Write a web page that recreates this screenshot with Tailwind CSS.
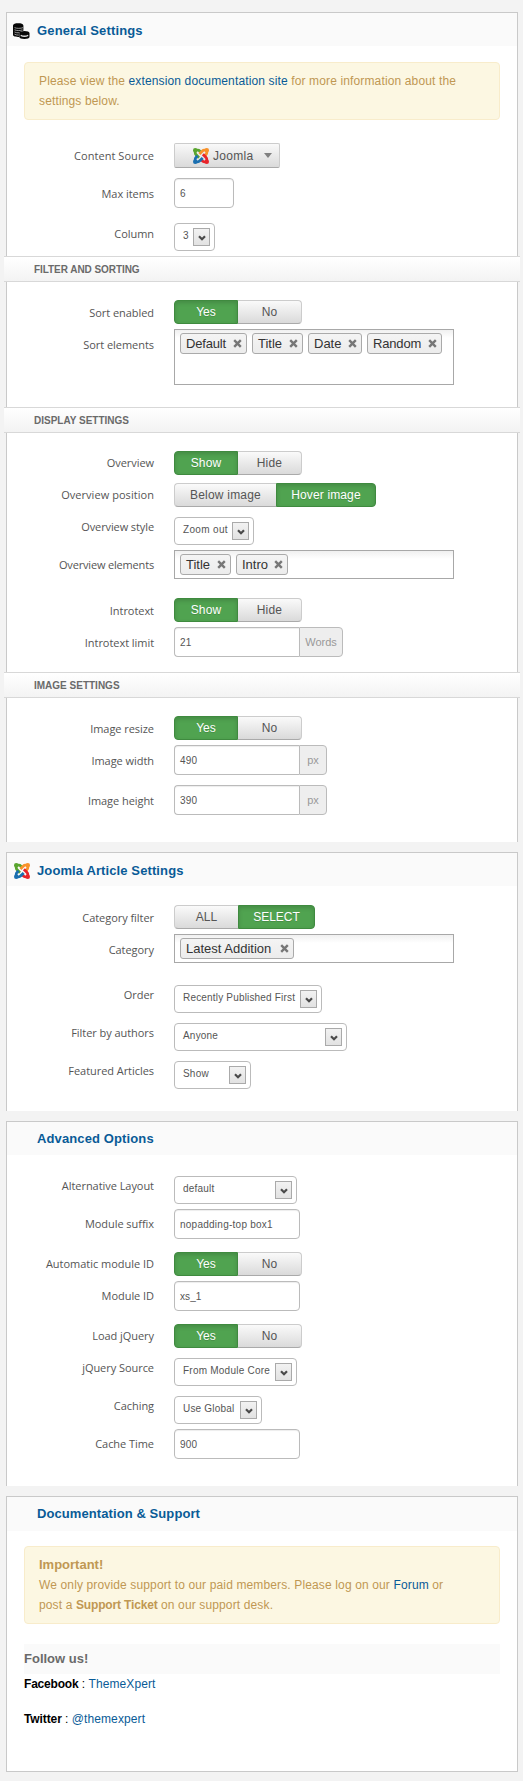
<!DOCTYPE html>
<html lang="en">
<head>
<meta charset="utf-8">
<title>Module settings</title>
<script src="https://cdn.jsdelivr.net/npm/@tailwindcss/browser@4"></script>
</head>
<body class="bg-[#f3f3f3] font-['Liberation_Sans',Arial,sans-serif] text-[12px] text-[#555]">

<svg class="hidden">
  <symbol id="joomla" viewBox="0 0 16 16">
    <g fill="none" stroke-width="2.8" stroke-linejoin="round">
      <path stroke="#5aa52f" d="M2.2 2.2V4.6Q2.2 6 3.4 7.1L6 9.7M2.2 2.2H4.6Q6 2.2 7 3.2L8.6 4.8"/>
      <path stroke="#f8922b" d="M13.8 2.2H11.4Q10.2 2.2 9.2 3.2L6.4 6M13.8 2.2V4.6Q13.8 5.8 12.8 6.8L11.4 8.2"/>
      <path stroke="#e8242a" d="M13.8 13.8V11.4Q13.8 10.2 12.8 9.2L9.9 6.3M13.8 13.8H11.4Q10.2 13.8 9.2 12.8L7.8 11.4"/>
      <path stroke="#1a6fb0" d="M2.2 13.8H4.6Q5.8 13.8 6.8 12.8L9.7 9.9M2.2 13.8V11.4Q2.2 10.2 3.2 9.2L4.6 7.8"/>
    </g>
    <circle cx="2.2" cy="2.2" r="2.2" fill="#5aa52f"/><circle cx="13.8" cy="2.2" r="2.2" fill="#f8922b"/>
    <circle cx="13.8" cy="13.8" r="2.2" fill="#e8242a"/><circle cx="2.2" cy="13.8" r="2.2" fill="#1a6fb0"/>
  </symbol>
  <symbol id="coins" viewBox="0 0 17 16">
    <path d="M0 2.4C0 .9 2.4.3 5.2.3s5.200.6 5.200 2.100v5.300C8 8 6.200 9 6.200 10.600v3.400C3 14 0 13.200 0 12z" fill="#080808"/>
    <path d="M1.500 4.600c2 1 6.500 1 8.500 0M1.500 6.800c2 1 6 1 8 0M1.500 9c1.300.7 3 .9 4.700.8M1.500 11.200c1.300.7 3 .9 4.300.9" fill="none" stroke="#bbb" stroke-width=".8"/>
    <path d="M6.300 10c0-1.400 2.200-2.100 5.100-2.100s5.100.7 5.100 2.100v4c0 1.200-2.200 1.900-5.100 1.900s-5.100-.7-5.100-1.900z" fill="#080808"/>
    <path d="M7.700 12.300c2 1 5.500 1 7.500 0" fill="none" stroke="#ddd" stroke-width="1.300"/>
  </symbol>
  <symbol id="x" viewBox="0 0 9 9"><path d="M1.200 1.200 7.800 7.800M7.800 1.200 1.200 7.800" stroke="#777" stroke-width="2.400" fill="none"/></symbol>
  <symbol id="v" viewBox="0 0 8 6"><path d="M1 1.200 4 4.200 7 1.200" stroke="#4a4a4a" stroke-width="2.200" fill="none"/></symbol>
</svg>

<main class="flex flex-col gap-[10px] pt-3 pl-[6px] pr-[5px]">

  <!-- General settings -->
  <section class="h-[830px] border border-b-0 border-[#c9c9c9] bg-white">
    <h2 class="flex h-[33px] items-center bg-[#fafafa] pt-[2px] pl-[6px] text-[13px] font-bold tracking-[0.15px] text-[#095b97]"><svg class="mr-[7px] h-4 w-[17px]"><use href="#coins"/></svg>General Settings</h2>
    <div class="mt-4 ml-[17px] h-[58px] w-[476px] rounded border border-[#f8eccb] bg-[#fcf7e2] px-[14px] py-2 leading-5 tracking-[0.135px] text-[#c09853]">Please view the <a class="text-[#095b97]">extension documentation site</a> for more information about the<br>settings below.</div>

    <div class="mt-[23px] flex h-[35px] gap-5">
      <label class="w-[147px] pt-[3px] text-right font-['Open_Sans',sans-serif] text-[11px] leading-5 tracking-[0.05px]">Content Source</label>
      <button class="flex h-[25px] w-[106px] items-center rounded-[2px] border border-[#ccc] border-b-[#aaa] bg-linear-to-b from-[#f9f9f9] to-[#dadada] pl-[18px] tracking-[0.3px]"><svg class="mr-1 h-4 w-4"><use href="#joomla"/></svg>Joomla<svg class="ml-[11px] h-[5px] w-2" viewBox="0 0 8 5"><path d="M0 0H8L4 5z" fill="#808080"/></svg></button>
    </div>
    <div class="flex h-[45px] gap-5">
      <label class="w-[147px] pt-[6px] text-right font-['Open_Sans',sans-serif] text-[11px] leading-5 tracking-[-0.05px]">Max items</label>
      <div class="flex h-[30px] w-[60px] items-center rounded border border-[#bbb] pl-[5px] text-[10px] tracking-[0.25px] shadow-[inset_0_1px_1px_rgba(0,0,0,0.075)]">6</div>
    </div>
    <div class="flex h-[33px] gap-5">
      <label class="w-[147px] pt-px text-right font-['Open_Sans',sans-serif] text-[11px] leading-5 tracking-[-0.05px]">Column</label>
      <div class="flex h-7 w-[41px] justify-between rounded border border-[#bbb] pr-1 pl-2 text-[10px] leading-6 tracking-[0.2px]">3<span class="mt-1 flex h-[18px] w-[17px] items-center justify-center border border-[#aaa] bg-linear-to-b from-[#f2f2f2] to-[#e2e2e2]"><svg class="mt-px h-[6px] w-2"><use href="#v"/></svg></span></div>
    </div>

    <h3 class="-mx-[3px] flex h-[26px] items-center border-y border-[#d8d8d8] bg-linear-to-b from-white to-[#f3f3f3] pl-[30px] text-[10px] font-bold tracking-[-0.06px] text-[#6a6a6a]">FILTER AND SORTING</h3>
    <div class="mt-[18px] flex h-[29px] gap-5">
      <label class="w-[147px] pt-[3px] text-right font-['Open_Sans',sans-serif] text-[11px] leading-5 tracking-[-0.05px]">Sort enabled</label>
      <div class="flex h-6 leading-[22px] text-center">
        <span class="w-16 rounded-l border border-[#3f8a3f] bg-[#50a350] text-white shadow-[inset_0_2px_4px_rgba(0,0,0,0.15)] text-shadow-2xs">Yes</span>
        <span class="w-16 rounded-r border border-l-0 border-[#ccc] border-b-[#aaa] bg-linear-to-b from-[#fafafa] to-[#dadada]">No</span>
      </div>
    </div>
    <div class="flex h-[78px] gap-5">
      <label class="w-[147px] pt-[6px] text-right font-['Open_Sans',sans-serif] text-[11px] leading-5 tracking-[-0.05px]">Sort elements</label>
      <div class="flex h-14 w-[280px] items-start gap-[5px] border border-[#a8a8a8] bg-linear-to-b from-[#f0f0f0] to-white to-[8px] pt-[3px] pl-[5px] text-[13px] leading-[19px] text-[#333]">
        <span class="flex h-[21px] w-[67px] items-center justify-between rounded-[3px] border border-[#aaa] bg-linear-to-b from-[#f4f4f4] to-[#ececec] pr-1 pl-[5px] tracking-[-0.17px]">Default<svg class="h-[9px] w-[9px]"><use href="#x"/></svg></span>
        <span class="flex h-[21px] w-[51px] items-center justify-between rounded-[3px] border border-[#aaa] bg-linear-to-b from-[#f4f4f4] to-[#ececec] pr-1 pl-[5px]">Title<svg class="h-[9px] w-[9px]"><use href="#x"/></svg></span>
        <span class="flex h-[21px] w-[54px] items-center justify-between rounded-[3px] border border-[#aaa] bg-linear-to-b from-[#f4f4f4] to-[#ececec] pr-1 pl-[5px]">Date<svg class="h-[9px] w-[9px]"><use href="#x"/></svg></span>
        <span class="flex h-[21px] w-[75px] items-center justify-between rounded-[3px] border border-[#aaa] bg-linear-to-b from-[#f4f4f4] to-[#ececec] pr-1 pl-[5px] tracking-[-0.17px]">Random<svg class="h-[9px] w-[9px]"><use href="#x"/></svg></span>
      </div>
    </div>

    <h3 class="-mx-[3px] flex h-[26px] items-center border-y border-[#d8d8d8] bg-linear-to-b from-white to-[#f3f3f3] pl-[30px] text-[10px] font-bold text-[#6a6a6a]">DISPLAY SETTINGS</h3>
    <div class="mt-[18px] flex h-8 gap-5">
      <label class="w-[147px] pt-[2px] text-right font-['Open_Sans',sans-serif] text-[11px] leading-5 tracking-[-0.05px]">Overview</label>
      <div class="flex h-6 leading-[22px] text-center">
        <span class="w-16 rounded-l border border-[#3f8a3f] bg-[#50a350] text-white shadow-[inset_0_2px_4px_rgba(0,0,0,0.15)] text-shadow-2xs tracking-[0.15px]">Show</span>
        <span class="w-16 rounded-r border border-l-0 border-[#ccc] border-b-[#aaa] bg-linear-to-b from-[#fafafa] to-[#dadada] tracking-[0.2px]">Hide</span>
      </div>
    </div>
    <div class="flex h-[34px] gap-5">
      <label class="w-[147px] pt-[2px] text-right font-['Open_Sans',sans-serif] text-[11px] leading-5 tracking-[0.05px]">Overview position</label>
      <div class="flex h-6 leading-[22px] text-center">
        <span class="w-[102px] rounded-l border border-r-0 border-[#ccc] border-b-[#aaa] bg-linear-to-b from-[#fafafa] to-[#dadada] tracking-[0.2px]">Below image</span>
        <span class="w-[100px] rounded-r border border-[#3f8a3f] bg-[#50a350] text-white shadow-[inset_0_2px_4px_rgba(0,0,0,0.15)] text-shadow-2xs tracking-[0.13px]">Hover image</span>
      </div>
    </div>
    <div class="flex h-[33px] gap-5">
      <label class="w-[147px] text-right font-['Open_Sans',sans-serif] text-[11px] leading-5 tracking-[-0.1px]">Overview style</label>
      <div class="flex h-7 w-20 justify-between rounded border border-[#bbb] pr-1 pl-2 text-[10px] leading-6 tracking-[0.33px]">Zoom out<span class="mt-1 flex h-[18px] w-[17px] items-center justify-center border border-[#aaa] bg-linear-to-b from-[#f2f2f2] to-[#e2e2e2]"><svg class="mt-px h-[6px] w-2"><use href="#v"/></svg></span></div>
    </div>
    <div class="flex h-12 gap-5">
      <label class="w-[147px] pt-[5px] text-right font-['Open_Sans',sans-serif] text-[11px] leading-5 tracking-[-0.17px]">Overview elements</label>
      <div class="flex h-[29px] w-[280px] items-start gap-[5px] border border-[#a8a8a8] bg-linear-to-b from-[#f0f0f0] to-white to-[8px] pt-[3px] pl-[5px] text-[13px] leading-[19px] text-[#333]">
        <span class="flex h-[21px] w-[51px] items-center justify-between rounded-[3px] border border-[#aaa] bg-linear-to-b from-[#f4f4f4] to-[#ececec] pr-1 pl-[5px]">Title<svg class="h-[9px] w-[9px]"><use href="#x"/></svg></span>
        <span class="flex h-[21px] w-[52px] items-center justify-between rounded-[3px] border border-[#aaa] bg-linear-to-b from-[#f4f4f4] to-[#ececec] pr-1 pl-[5px]">Intro<svg class="h-[9px] w-[9px]"><use href="#x"/></svg></span>
      </div>
    </div>
    <div class="flex h-[29px] gap-5">
      <label class="w-[147px] pt-[3px] text-right font-['Open_Sans',sans-serif] text-[11px] leading-5 tracking-[-0.05px]">Introtext</label>
      <div class="flex h-6 leading-[22px] text-center">
        <span class="w-16 rounded-l border border-[#3f8a3f] bg-[#50a350] text-white shadow-[inset_0_2px_4px_rgba(0,0,0,0.15)] text-shadow-2xs tracking-[0.15px]">Show</span>
        <span class="w-16 rounded-r border border-l-0 border-[#ccc] border-b-[#aaa] bg-linear-to-b from-[#fafafa] to-[#dadada] tracking-[0.2px]">Hide</span>
      </div>
    </div>
    <div class="flex h-[45px] gap-5">
      <label class="w-[147px] pt-[6px] text-right font-['Open_Sans',sans-serif] text-[11px] leading-5 tracking-[-0.05px]">Introtext limit</label>
      <div class="flex h-[30px]">
        <div class="flex w-[125px] items-center rounded-l border border-r-0 border-[#bbb] pl-[5px] text-[10px] tracking-[0.25px] shadow-[inset_0_1px_1px_rgba(0,0,0,0.075)]">21</div>
        <div class="flex w-[44px] items-center justify-center rounded-r border border-[#bbb] bg-[#eee] text-[11px] text-[#999]">Words</div>
      </div>
    </div>

    <h3 class="-mx-[3px] flex h-[26px] items-center border-y border-[#d8d8d8] bg-linear-to-b from-white to-[#f3f3f3] pl-[30px] text-[10px] font-bold text-[#6a6a6a]">IMAGE SETTINGS</h3>
    <div class="mt-[18px] flex h-[29px] gap-5">
      <label class="w-[147px] pt-[3px] text-right font-['Open_Sans',sans-serif] text-[11px] leading-5 tracking-[-0.05px]">Image resize</label>
      <div class="flex h-6 leading-[22px] text-center">
        <span class="w-16 rounded-l border border-[#3f8a3f] bg-[#50a350] text-white shadow-[inset_0_2px_4px_rgba(0,0,0,0.15)] text-shadow-2xs">Yes</span>
        <span class="w-16 rounded-r border border-l-0 border-[#ccc] border-b-[#aaa] bg-linear-to-b from-[#fafafa] to-[#dadada]">No</span>
      </div>
    </div>
    <div class="flex h-10 gap-5">
      <label class="w-[147px] pt-[6px] text-right font-['Open_Sans',sans-serif] text-[11px] leading-5 tracking-[-0.05px]">Image width</label>
      <div class="flex h-[30px]">
        <div class="flex w-[125px] items-center rounded-l border border-r-0 border-[#bbb] pl-[5px] text-[10px] tracking-[0.25px] shadow-[inset_0_1px_1px_rgba(0,0,0,0.075)]">490</div>
        <div class="flex w-7 items-center justify-center rounded-r border border-[#bbb] bg-[#eee] text-[11px] text-[#999]">px</div>
      </div>
    </div>
    <div class="flex h-10 gap-5">
      <label class="w-[147px] pt-[6px] text-right font-['Open_Sans',sans-serif] text-[11px] leading-5 tracking-[-0.05px]">Image height</label>
      <div class="flex h-[30px]">
        <div class="flex w-[125px] items-center rounded-l border border-r-0 border-[#bbb] pl-[5px] text-[10px] tracking-[0.25px] shadow-[inset_0_1px_1px_rgba(0,0,0,0.075)]">390</div>
        <div class="flex w-7 items-center justify-center rounded-r border border-[#bbb] bg-[#eee] text-[11px] text-[#999]">px</div>
      </div>
    </div>
  </section>

  <!-- Joomla article settings -->
  <section class="h-[259px] border border-b-0 border-[#c9c9c9] bg-white">
    <h2 class="flex h-[33px] items-center bg-[#fafafa] pt-[2px] pl-[7px] text-[13px] font-bold tracking-[0.11px] text-[#095b97]"><svg class="mr-[7px] h-4 w-4"><use href="#joomla"/></svg>Joomla Article Settings</h2>
    <div class="mt-[19px] flex h-[29px] gap-5">
      <label class="w-[147px] pt-[3px] text-right font-['Open_Sans',sans-serif] text-[11px] leading-5 tracking-[-0.05px]">Category filter</label>
      <div class="flex h-6 leading-[22px] text-center">
        <span class="w-16 rounded-l border border-r-0 border-[#ccc] border-b-[#aaa] bg-linear-to-b from-[#fafafa] to-[#dadada]">ALL</span>
        <span class="w-[77px] rounded-r border border-[#3f8a3f] bg-[#50a350] text-white shadow-[inset_0_2px_4px_rgba(0,0,0,0.15)] text-shadow-2xs">SELECT</span>
      </div>
    </div>
    <div class="flex h-[51px] gap-5">
      <label class="w-[147px] pt-[6px] text-right font-['Open_Sans',sans-serif] text-[11px] leading-5 tracking-[-0.05px]">Category</label>
      <div class="flex h-[29px] w-[280px] items-start border border-[#a8a8a8] bg-linear-to-b from-[#f0f0f0] to-white to-[8px] pt-[3px] pl-[5px] text-[13px] leading-[19px] text-[#333]">
        <span class="flex h-[21px] w-[114px] items-center justify-between rounded-[3px] border border-[#aaa] bg-linear-to-b from-[#f4f4f4] to-[#ececec] pr-1 pl-[5px]">Latest Addition<svg class="h-[9px] w-[9px]"><use href="#x"/></svg></span>
      </div>
    </div>
    <div class="flex h-[38px] gap-5">
      <label class="w-[147px] text-right font-['Open_Sans',sans-serif] text-[11px] leading-5 tracking-[-0.05px]">Order</label>
      <div class="flex h-7 w-[148px] justify-between rounded border border-[#bbb] pr-1 pl-2 text-[10px] leading-6 tracking-[0.18px]">Recently Published First<span class="mt-1 flex h-[18px] w-[17px] items-center justify-center border border-[#aaa] bg-linear-to-b from-[#f2f2f2] to-[#e2e2e2]"><svg class="mt-px h-[6px] w-2"><use href="#v"/></svg></span></div>
    </div>
    <div class="flex h-[38px] gap-5">
      <label class="w-[147px] text-right font-['Open_Sans',sans-serif] text-[11px] leading-5 tracking-[-0.05px]">Filter by authors</label>
      <div class="flex h-7 w-[173px] justify-between rounded border border-[#bbb] pr-1 pl-2 text-[10px] leading-6 tracking-[0.2px]">Anyone<span class="mt-1 flex h-[18px] w-[17px] items-center justify-center border border-[#aaa] bg-linear-to-b from-[#f2f2f2] to-[#e2e2e2]"><svg class="mt-px h-[6px] w-2"><use href="#v"/></svg></span></div>
    </div>
    <div class="flex h-7 gap-5">
      <label class="w-[147px] text-right font-['Open_Sans',sans-serif] text-[11px] leading-5 tracking-[-0.05px]">Featured Articles</label>
      <div class="flex h-7 w-[77px] justify-between rounded border border-[#bbb] pr-1 pl-2 text-[10px] leading-6 tracking-[0.2px]">Show<span class="mt-1 flex h-[18px] w-[17px] items-center justify-center border border-[#aaa] bg-linear-to-b from-[#f2f2f2] to-[#e2e2e2]"><svg class="mt-px h-[6px] w-2"><use href="#v"/></svg></span></div>
    </div>
  </section>

  <!-- Advanced options -->
  <section class="h-[365px] border border-b-0 border-[#c9c9c9] bg-white">
    <h2 class="flex h-[33px] items-center bg-[#fafafa] pl-[30px] text-[13px] font-bold tracking-[0.12px] text-[#095b97]">Advanced Options</h2>
    <div class="mt-[21px] flex h-[33px] gap-5">
      <label class="w-[147px] text-right font-['Open_Sans',sans-serif] text-[11px] leading-5 tracking-[-0.05px]">Alternative Layout</label>
      <div class="flex h-7 w-[123px] justify-between rounded border border-[#bbb] pr-1 pl-2 text-[10px] leading-6 tracking-[0.2px]">default<span class="mt-1 flex h-[18px] w-[17px] items-center justify-center border border-[#aaa] bg-linear-to-b from-[#f2f2f2] to-[#e2e2e2]"><svg class="mt-px h-[6px] w-2"><use href="#v"/></svg></span></div>
    </div>
    <div class="flex h-[43px] gap-5">
      <label class="w-[147px] pt-[5px] text-right font-['Open_Sans',sans-serif] text-[11px] leading-5 tracking-[-0.05px]">Module suffix</label>
      <div class="flex h-[30px] w-[126px] items-center rounded border border-[#bbb] pl-[5px] text-[10px] tracking-[0.25px] shadow-[inset_0_1px_1px_rgba(0,0,0,0.075)]">nopadding-top box1</div>
    </div>
    <div class="flex h-[29px] gap-5">
      <label class="w-[147px] pt-[2px] text-right font-['Open_Sans',sans-serif] text-[11px] leading-5 tracking-[-0.02px]">Automatic module ID</label>
      <div class="flex h-6 leading-[22px] text-center">
        <span class="w-16 rounded-l border border-[#3f8a3f] bg-[#50a350] text-white shadow-[inset_0_2px_4px_rgba(0,0,0,0.15)] text-shadow-2xs">Yes</span>
        <span class="w-16 rounded-r border border-l-0 border-[#ccc] border-b-[#aaa] bg-linear-to-b from-[#fafafa] to-[#dadada]">No</span>
      </div>
    </div>
    <div class="flex h-[43px] gap-5">
      <label class="w-[147px] pt-[5px] text-right font-['Open_Sans',sans-serif] text-[11px] leading-5 tracking-[-0.05px]">Module ID</label>
      <div class="flex h-[30px] w-[126px] items-center rounded border border-[#bbb] pl-[5px] text-[10px] tracking-[0.1px] shadow-[inset_0_1px_1px_rgba(0,0,0,0.075)]">xs_1</div>
    </div>
    <div class="flex h-[34px] gap-5">
      <label class="w-[147px] pt-[2px] text-right font-['Open_Sans',sans-serif] text-[11px] leading-5 tracking-[-0.05px]">Load jQuery</label>
      <div class="flex h-6 leading-[22px] text-center">
        <span class="w-16 rounded-l border border-[#3f8a3f] bg-[#50a350] text-white shadow-[inset_0_2px_4px_rgba(0,0,0,0.15)] text-shadow-2xs">Yes</span>
        <span class="w-16 rounded-r border border-l-0 border-[#ccc] border-b-[#aaa] bg-linear-to-b from-[#fafafa] to-[#dadada]">No</span>
      </div>
    </div>
    <div class="flex h-[38px] gap-5">
      <label class="w-[147px] text-right font-['Open_Sans',sans-serif] text-[11px] leading-5 tracking-[-0.05px]">jQuery Source</label>
      <div class="flex h-7 w-[123px] justify-between rounded border border-[#bbb] pr-1 pl-2 text-[10px] leading-6 tracking-[0.23px]">From Module Core<span class="mt-1 flex h-[18px] w-[17px] items-center justify-center border border-[#aaa] bg-linear-to-b from-[#f2f2f2] to-[#e2e2e2]"><svg class="mt-px h-[6px] w-2"><use href="#v"/></svg></span></div>
    </div>
    <div class="flex h-[33px] gap-5">
      <label class="w-[147px] text-right font-['Open_Sans',sans-serif] text-[11px] leading-5 tracking-[-0.05px]">Caching</label>
      <div class="flex h-7 w-[88px] justify-between rounded border border-[#bbb] pr-1 pl-2 text-[10px] leading-6 tracking-[0.2px]">Use Global<span class="mt-1 flex h-[18px] w-[17px] items-center justify-center border border-[#aaa] bg-linear-to-b from-[#f2f2f2] to-[#e2e2e2]"><svg class="mt-px h-[6px] w-2"><use href="#v"/></svg></span></div>
    </div>
    <div class="flex h-[30px] gap-5">
      <label class="w-[147px] pt-[5px] text-right font-['Open_Sans',sans-serif] text-[11px] leading-5 tracking-[-0.05px]">Cache Time</label>
      <div class="flex h-[30px] w-[126px] items-center rounded border border-[#bbb] pl-[5px] text-[10px] tracking-[0.25px] shadow-[inset_0_1px_1px_rgba(0,0,0,0.075)]">900</div>
    </div>
  </section>

  <!-- Documentation and support -->
  <section class="h-[276px] border border-[#c9c9c9] bg-white">
    <h2 class="flex h-[34px] items-center bg-[#fafafa] pl-[30px] text-[13px] font-bold tracking-[0.085px] text-[#095b97]">Documentation &amp; Support</h2>
    <div class="mt-[15px] ml-[17px] h-[78px] w-[476px] rounded border border-[#f8eccb] bg-[#fcf7e2] px-[14px] py-2 leading-5 tracking-[0.135px] text-[#c09853]">
      <h4 class="text-[13px] font-bold tracking-normal">Important!</h4>
      We only provide support to our paid members. Please log on our <a class="text-[#095b97]">Forum</a> or<br>post a <b class="tracking-[-0.16px]">Support Ticket</b> on our support desk.
    </div>
    <h3 class="mt-5 ml-[17px] h-[30px] w-[476px] bg-[#fafafa] text-[13px] leading-[30px] font-bold text-[#6a6a6a]">Follow us!</h3>
    <p class="ml-[17px] leading-5 text-black"><b class="tracking-[-0.19px]">Facebook</b> : <a class="tracking-[0.1px] text-[#095b97]">ThemeXpert</a></p>
    <p class="mt-[15px] ml-[17px] leading-5 text-black"><b class="tracking-[-0.1px]">Twitter</b> : <a class="tracking-[0.1px] text-[#095b97]">@themexpert</a></p>
  </section>
</main>
</body>
</html>
